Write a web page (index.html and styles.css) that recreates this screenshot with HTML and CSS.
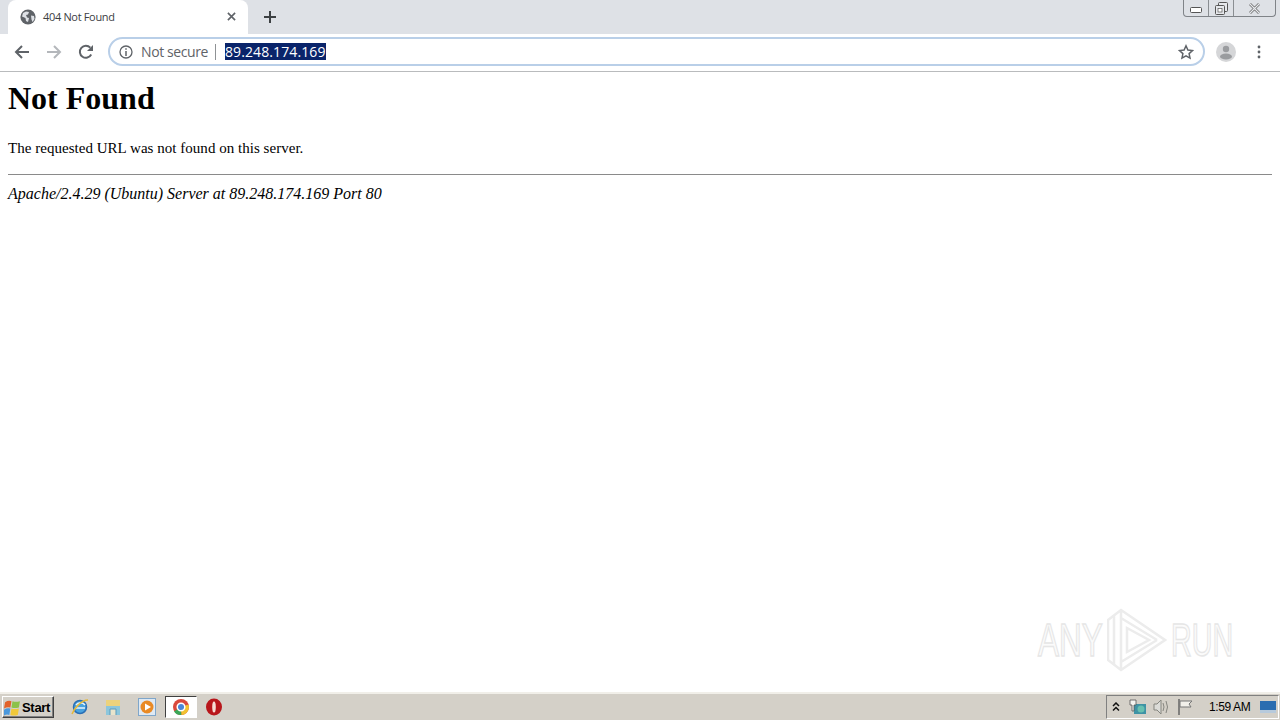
FILE: index.html
```html
<!DOCTYPE html>
<html lang="en">
<head>
<meta charset="utf-8">
<title>404 Not Found</title>
<link rel="stylesheet" href="styles.css">
</head>
<body>
<div class="screen">
  <header class="chrome">
    <div class="tabstrip">
      <div class="tab">
        <svg class="favicon" viewBox="0 0 16 16"><circle cx="8" cy="8" r="7.600" fill="#5f6368"/><path d="M3 4l3-1.500 3 .5-1 2.500-2 .5 1 2.500 2 .5-1 4-2-1-.5-3L2 7.500z M11 6.500l3 .5.500 3-2 3-1-2.500z" fill="#dee1e6"/></svg>
        <span class="tab-title">404 Not Found</span>
        <svg class="tab-close" viewBox="0 0 10 10"><path d="M1 1l8 8M9 1l-8 8" stroke="#5f6368" stroke-width="1.800" fill="none"/></svg>
      </div>
      <svg class="newtab" viewBox="0 0 12 12"><path d="M6 0v12M0 6h12" stroke="#3c4043" stroke-width="2" fill="none"/></svg>
      <div class="winctl">
        <div class="winbtn btn-min"><svg viewBox="0 0 12 6" width="12" height="6"><rect x=".5" y=".5" width="11" height="5" rx="1" fill="#fff" stroke="#555"/></svg></div>
        <div class="winbtn btn-max"><svg viewBox="0 0 13 13" width="13" height="13"><rect x="3.500" y=".5" width="9" height="9" rx="1" fill="#e6e8ec" stroke="#555"/><rect x=".5" y="3.500" width="9" height="9" rx="1" fill="#e6e8ec" stroke="#555"/><rect x="3" y="6.500" width="4" height="3.500" fill="#fff" stroke="#555" stroke-width=".7"/></svg></div>
        <div class="winbtn btn-close"><svg viewBox="0 0 13 11" width="13" height="11"><path d="M2 1l9 9M11 1l-9 9" stroke="#666" stroke-width="2.600" fill="none"/><path d="M2 1l9 9M11 1l-9 9" stroke="#e8eaee" stroke-width="1.200" fill="none"/></svg></div>
      </div>
    </div>
    <div class="toolbar">
      <svg class="nav nav-back" viewBox="0 0 16 16"><path d="M15 8H2.500M8 2L2 8l6 6" stroke="#5f6368" stroke-width="2" fill="none"/></svg>
      <svg class="nav nav-fwd" viewBox="0 0 16 16"><path d="M1 8h12.500M8 2l6 6-6 6" stroke="#b4b7bb" stroke-width="2" fill="none"/></svg>
      <svg class="nav nav-reload" viewBox="0 0 16 16"><path d="M13.200 10.500A6 6 0 1 1 12.300 3.700" stroke="#5f6368" stroke-width="2" fill="none"/><path d="M15 1v6H9z" fill="#5f6368"/></svg>
      <div class="omnibox">
        <svg class="info" viewBox="0 0 14 14"><circle cx="7" cy="7" r="6" fill="none" stroke="#5f6368" stroke-width="1.300"/><path d="M7 6v5M7 3.200v1.600" stroke="#5f6368" stroke-width="1.500"/></svg>
        <span class="secure">Not secure</span>
        <span class="divider"></span>
        <span class="url">89.248.174.169</span>
        <svg class="star" viewBox="0 0 16 16"><path d="M8 1.800l1.900 4.200 4.600.5-3.400 3.100.9 4.500L8 11.800l-4 2.300.9-4.500L1.500 6.500l4.600-.5z" fill="none" stroke="#5f6368" stroke-width="1.500"/></svg>
      </div>
      <svg class="avatar" viewBox="0 0 20 20"><circle cx="10" cy="10" r="10" fill="#d5d6d8"/><circle cx="10" cy="7" r="3.200" fill="#9a9c9f"/><ellipse cx="10" cy="14.500" rx="6" ry="3" fill="#9a9c9f"/></svg>
      <svg class="menu" viewBox="0 0 4 14"><circle cx="2" cy="2" r="1.400" fill="#5f6368"/><circle cx="2" cy="7" r="1.400" fill="#5f6368"/><circle cx="2" cy="12" r="1.400" fill="#5f6368"/></svg>
    </div>
  </header>

  <main class="page">
    <h1 class="heading">Not Found</h1>
    <p class="message">The requested URL was not found on this server.</p>
    <hr class="rule">
    <address class="signature">Apache/2.4.29 (Ubuntu) Server at 89.248.174.169 Port 80</address>
    <div class="watermark">
      <span class="wm-text wm-any">ANY</span>
      <svg class="wm-logo" viewBox="0 0 60 64"><path d="M1 12L14 2l44 30-44 30-13-10z M14 2v60 M7 7v50 M20 20l22 12-22 12z M14 10l36 22M14 54l36-22" fill="none" stroke="#ececec" stroke-width="2.500"/></svg>
      <span class="wm-text wm-run">RUN</span>
    </div>
  </main>

  <footer class="taskbar">
    <button class="start">
      <svg class="start-flag" viewBox="0 0 16 16"><path d="M1 3q3-2 6-1l-1 6q-3-1-6 1z" fill="#e2622a"/><path d="M8 2q3 1 7 0l-1 6q-4 1-7 0z" fill="#8cc24a"/><path d="M0 10q3-2 6-1l-1 6q-3-1-6 1z" fill="#4a98dc"/><path d="M7 9q3 1 7 0l-1 6q-4 1-7 0z" fill="#f0c93a"/></svg>
      <span>Start</span>
    </button>
    <div class="quick">
      <svg class="tb-icon" viewBox="0 0 18 18"><circle cx="9" cy="9" r="6.500" fill="#4aa3df" stroke="#2a6fb5" stroke-width="1.500"/><path d="M4 10h10M5 7c2-3 7-3 9 0" stroke="#e8f4fc" stroke-width="1.500" fill="none"/><path d="M1 16c2-5 9-14 16-14" stroke="#e6b93a" stroke-width="1.500" fill="none"/></svg>
      <svg class="tb-icon" viewBox="0 0 18 18"><path d="M2 2h14v15H2z" fill="#8cc6dc"/><path d="M2 2h14v6H2z" fill="#ecd27c"/><path d="M6 17v-6h6v6" fill="#e8e4cc" stroke="#5a9bbd"/></svg>
      <svg class="tb-icon" viewBox="0 0 18 18"><rect x=".5" y=".5" width="17" height="17" fill="#dfe9f3" stroke="#7fa6ca"/><circle cx="9" cy="9" r="6.500" fill="#e98a25"/><path d="M7 5.500l6 3.500-6 3.500z" fill="#fff"/></svg>
      <div class="chrome-task">
        <svg class="tb-icon" viewBox="0 0 18 18"><circle cx="9" cy="9" r="8" fill="#d9493c"/><path d="M9 9L2 13.500A8 8 0 0 0 9.500 17z" fill="#3aa757"/><path d="M9 9l7.500-2.500A8 8 0 0 1 9.500 17z" fill="#f2c230"/><circle cx="9" cy="9" r="3.800" fill="#4a86d8" stroke="#fff" stroke-width="1.500"/></svg>
      </div>
      <svg class="tb-icon" viewBox="0 0 18 18"><ellipse cx="9" cy="9" rx="8" ry="8.500" fill="#b8161b"/><ellipse cx="9" cy="9" rx="1.800" ry="5.500" fill="#f6dcd4"/></svg>
    </div>
    <div class="tray">
      <svg class="tray-up" viewBox="0 0 8 10"><path d="M1 4l3-3 3 3M1 8.500l3-3 3 3" stroke="#111" stroke-width="1.500" fill="none"/></svg>
      <svg class="tray-icon" viewBox="0 0 18 16"><rect x="5" y="5" width="12" height="10" fill="#3e93a5"/><circle cx="12" cy="10" r="3.500" fill="#68c0b0"/><path d="M1 1h6v5H5v6H3V6H1z" fill="#f4f4f0" stroke="#555" stroke-width=".8"/></svg>
      <svg class="tray-icon tray-vol" viewBox="0 0 18 16"><path d="M2 5h3l4-4v14l-4-4H2z" fill="#dcdcd8" stroke="#85857f"/><path d="M11 4q2 4 0 8M14 2q3 6 0 12" stroke="#85857f" fill="none"/></svg>
      <svg class="tray-icon" viewBox="0 0 18 16"><path d="M2 0v16" stroke="#666" stroke-width="1.500"/><path d="M3 2h12l-3 3 2 3H3z" fill="#f2f0ea" stroke="#777"/></svg>
      <span class="clock">1:59 AM</span>
      <svg class="show-desktop" viewBox="0 0 16 12"><rect width="16" height="12" fill="#2b6db0"/><rect y="9" width="16" height="3" fill="#b7cadc"/></svg>
    </div>
  </footer>
</div>
</body>
</html>
```
FILE: styles.css
```css
* { box-sizing: border-box; }
html, body { margin: 0; padding: 0; width: 1280px; height: 720px; overflow: hidden; background: #fff; }
.screen { width: 1280px; height: 720px; display: flex; flex-direction: column; }

.chrome { flex: none; height: 72px; border-bottom: 1px solid #b9bbbd; font-family: "Open Sans", "Noto Sans", sans-serif; }
.tabstrip { height: 34px; background: #dee1e6; display: flex; align-items: flex-start; padding-left: 8px; position: relative; }
.tab { width: 240px; height: 34px; background: #fff; border-radius: 8px 8px 0 0; display: flex; align-items: center; padding: 0 10px 1px 12px; }
.favicon { width: 16px; height: 16px; flex: none; }
.tab-title { margin-left: 7px; flex: 1; font-size: 11px; letter-spacing: -.33px; color: #3c4043; white-space: nowrap; }
.tab-close { width: 9px; height: 9px; flex: none; margin-right: 2px; }
.newtab { width: 12px; height: 12px; margin: 11px 0 0 16px; }
.winctl { position: absolute; top: 0; right: 4px; width: 93px; height: 17px; display: flex; border: 1px solid #7f8388; border-top: 0; border-radius: 0 0 4px 4px; }
.winbtn { height: 16px; display: flex; align-items: center; justify-content: center; border-right: 1px solid #8a8e92; }
.btn-min { width: 25px; padding-top: 4px; }
.btn-max { width: 25px; }
.btn-close { flex: 1; border-right: 0; }

.toolbar { height: 37px; background: #fff; display: flex; align-items: center; padding: 0 13px 2px 14px; }
.nav { width: 16px; height: 16px; flex: none; margin-right: 16px; }
.nav-reload { margin-right: 14px; }
.omnibox { flex: none; width: 1097px; height: 29px; border: 2px solid #b9cfe8; border-radius: 15px; display: flex; align-items: center; padding: 0 9px; }
.info { width: 14px; height: 14px; flex: none; }
.secure { margin-left: 8px; font-size: 14px; letter-spacing: -.4px; color: #5f6368; white-space: nowrap; }
.divider { width: 1px; height: 16px; background: #8f9295; margin: 0 9px 0 7px; }
.url { background: #0a246a; color: #fff; font-size: 14px; line-height: 17px; letter-spacing: .1px; white-space: nowrap; }
.star { width: 16px; height: 16px; margin-left: auto; }
.avatar { width: 20px; height: 20px; flex: none; margin-left: 11px; }
.menu { width: 4px; height: 14px; flex: none; margin-left: 21px; }

.page { flex: 1; min-height: 0; padding: 0 8px; font-family: "Liberation Serif", "Times New Roman", serif; color: #000; position: relative; }
.heading { margin: 8px 0 0; font-size: 32px; line-height: 37px; font-weight: 700; }
.message { margin: 22px 0 0; font-size: 15px; line-height: 18px; letter-spacing: .03px; }
.rule { margin: 17px 0 0; height: 1px; border: 0; background: #8a8a8a; }
.signature { margin-top: 10px; font-size: 16px; line-height: 18px; font-style: italic; }

.watermark { position: absolute; left: 1038px; top: 536px; height: 64px; display: flex; align-items: center; gap: 4px; }
.wm-text { flex: none; height: 64px; font-family: "Liberation Sans", sans-serif; font-size: 47px; line-height: 64px; color: #fbfbfb; -webkit-text-stroke: 1.500px #e6e6e6; transform-origin: left center; white-space: nowrap; }
.wm-any { width: 65px; transform: scaleX(.67); }
.wm-run { width: 62px; transform: scaleX(.61); }
.wm-logo { width: 60px; height: 64px; flex: none; }

.taskbar { flex: none; height: 28px; background: #d4d0c8; border-top: 2px solid #f1efe9; display: flex; align-items: center; justify-content: space-between; padding: 0 1px 0 2px; font-family: "Liberation Sans", Arial, sans-serif; }
.start { width: 52px; height: 22px; padding: 0 0 0 1px; display: flex; align-items: center; gap: 1px; background: #d4d0c8; border: 1px solid; border-color: #fff #404040 #404040 #fff; box-shadow: inset -1px -1px 0 #808080; font: 700 13px "Liberation Sans", Arial, sans-serif; letter-spacing: -.3px; color: #000; }
.start-flag { width: 17px; height: 17px; flex: none; }
.quick { display: flex; align-items: center; margin: 0 auto 0 17px; }
.tb-icon { width: 18px; height: 18px; flex: none; }
.quick > .tb-icon { margin-right: 15px; }
.quick > .tb-icon:nth-child(2) { margin-right: 16px; }
.quick > .tb-icon:nth-child(3) { margin-right: 9px; }
.chrome-task { width: 32px; height: 22px; background: #fff; border: 1px solid; border-color: #404040 #fff #fff #404040; display: flex; align-items: center; justify-content: center; margin-right: 8px; }
.tray { height: 24px; width: 173px; display: flex; align-items: center; border: 1px solid; border-color: #808080 #fff #fff #808080; padding-left: 5px; }
.tray-up { width: 8px; height: 10px; flex: none; margin-right: 9px; }
.tray-icon { width: 18px; height: 16px; flex: none; margin-right: 5px; }
.tray-vol { margin-right: 7px; }
.clock { font-size: 12px; letter-spacing: -.4px; color: #000; margin-left: 9px; white-space: nowrap; }
.show-desktop { width: 16px; height: 12px; flex: none; margin-left: 10px; }
```
